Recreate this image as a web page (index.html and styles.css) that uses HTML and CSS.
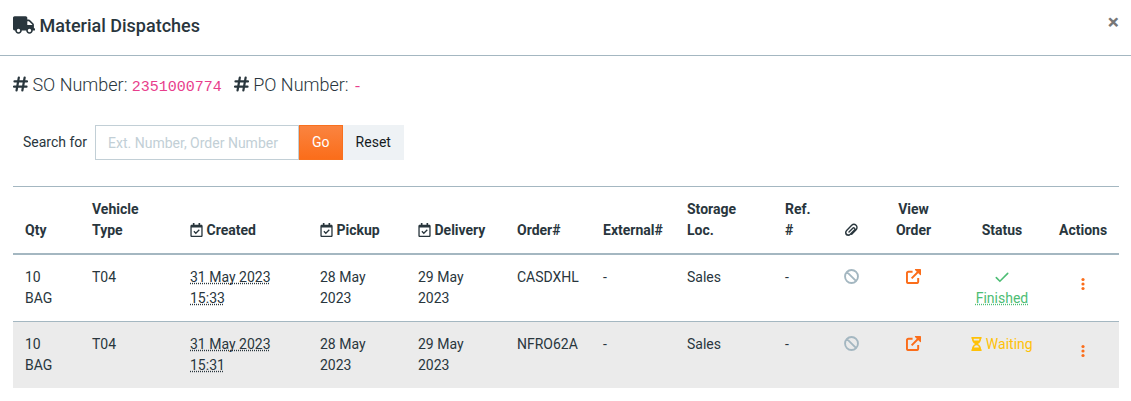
FILE: index.html
```html
<!DOCTYPE html>
<html lang="en">
<head>
    <meta charset="UTF-8">
    <meta name="viewport" content="width=device-width, initial-scale=1.0">
    <title>Material Dispatches</title>
    <link rel="stylesheet" href="styles.css">
</head>
<body>
    <svg class="sprite" aria-hidden="true">
        <symbol id="truck" viewBox="0 0 640 512">
            <path d="M624 352h-16V243.9c0-12.7-5.1-24.9-14.1-33.9L494 110.1c-9-9-21.2-14.1-33.9-14.1H416V48c0-26.5-21.5-48-48-48H48C21.5 0 0 21.5 0 48v320c0 26.5 21.5 48 48 48h16c0 53 43 96 96 96s96-43 96-96h128c0 53 43 96 96 96s96-43 96-96h48c8.8 0 16-7.2 16-16v-32c0-8.8-7.2-16-16-16zM160 464c-26.5 0-48-21.5-48-48s21.5-48 48-48 48 21.5 48 48-21.5 48-48 48zm320 0c-26.5 0-48-21.5-48-48s21.5-48 48-48 48 21.5 48 48-21.5 48-48 48zm80-208H416V144h44.1l99.9 99.9V256z"/>
        </symbol>
        <symbol id="hash" viewBox="0 0 16 16">
            <path d="M6.2 1.2 3.800 14.800M12.400 1.200 10 14.800M1.600 5.200H15M1 10.800H14.400" fill="none" stroke="currentColor" stroke-width="2.400" stroke-linecap="round"/>
        </symbol>
        <symbol id="calendar" viewBox="0 0 14 16">
            <path d="M3.2 0h1.1c.3 0 .4.2.4.4V2h4.6V.4c0-.2.1-.4.4-.4h1.1c.3 0 .4.2.4.4V2h1.3C13.3 2 14 2.7 14 3.5v11c0 .8-.7 1.5-1.5 1.5h-11C.7 16 0 15.3 0 14.5v-11C0 2.7.7 2 1.5 2h1.3V.4c0-.2.2-.4.4-.4zM1.5 5v9.3c0 .1.1.2.2.2h10.6c.1 0 .2-.1.2-.2V5z"/>
            <path d="m4 9.500 2.200 2.200L10.200 7.800" fill="none" stroke="currentColor" stroke-width="1.500"/>
        </symbol>
        <symbol id="clip" viewBox="0 0 16 16">
            <path d="M5.700 10.300 10 6a1.400 1.400 0 0 1 2 2L7.200 12.800A2.900 2.900 0 0 1 3 8.700L8.800 2.600a3.500 3.500 0 0 1 5 5L8.800 12.900M3 8.700a3.500 3.500 0 0 0 0 5 3.500 3.500 0 0 0 4.200-.9" fill="none" stroke="currentColor" stroke-width="1.600" stroke-linecap="round"/>
        </symbol>
        <symbol id="ban" viewBox="0 0 16 16">
            <path d="M3 3 13 13M8 1.100a6.900 6.900 0 1 0 0 13.800A6.900 6.900 0 1 0 8 1.100z" fill="none" stroke="currentColor" stroke-width="2"/>
        </symbol>
        <symbol id="external" viewBox="0 0 16 16">
            <path d="M7 3H2.500A1.500 1.500 0 0 0 1 4.500v9A1.500 1.500 0 0 0 2.500 15h9a1.500 1.500 0 0 0 1.500-1.500V9.500M6 10 13 3" fill="none" stroke="currentColor" stroke-width="2.100"/>
            <path d="M9.800 0H15.300q.7 0 .7.700V6.200q-.3.700-1 .2L9.600 1q-.4-.7.2-1z"/>
        </symbol>
        <symbol id="check" viewBox="0 0 14 14">
            <path d="M1.300 7.600 4.900 11.200 12.700 3.400" fill="none" stroke="currentColor" stroke-width="1.600" stroke-linecap="round"/>
        </symbol>
        <symbol id="hourglass" viewBox="0 0 384 512">
            <path d="M360 0H24C10.700 0 0 10.700 0 24v16c0 13.300 10.700 24 24 24 0 91 51 167.700 120.800 192C75 280.300 24 357 24 448c-13.300 0-24 10.700-24 24v16c0 13.300 10.700 24 24 24h336c13.300 0 24-10.700 24-24v-16c0-13.300-10.700-24-24-24 0-91-51-167.700-120.800-192C309 231.700 360 155 360 64c13.300 0 24-10.700 24-24V24c0-13.300-10.700-24-24-24zm-75 384H99c17-46.800 52-80 93-80s76 33.200 93 80zm0-256H99c-7.200-19.600-11-41-11-64h208c0 23-3.900 44.400-11 64z"/>
        </symbol>
        <symbol id="dots" viewBox="0 0 4 14">
            <circle cx="2" cy="2.500" r="1.600"/>
            <circle cx="2" cy="7" r="1.600"/>
            <circle cx="2" cy="11.500" r="1.600"/>
        </symbol>
    </svg>

    <header class="modal-header">
        <h1 class="modal-title"><svg class="icon-truck"><use href="#truck"/></svg> Material Dispatches</h1>
        <button type="button" class="close" aria-label="Close">&times;</button>
    </header>

    <main class="modal-body">
        <div class="numbers">
            <span><svg class="icon-hash"><use href="#hash"/></svg> SO Number: <code>2351000774</code></span>
            <span><svg class="icon-hash"><use href="#hash"/></svg> PO Number: <code>-</code></span>
        </div>

        <form class="search">
            <label for="search">Search for</label>
            <div class="input-group">
                <input type="text" id="search" placeholder="Ext. Number, Order Number">
                <button type="submit" class="btn btn-primary">Go</button>
                <button type="reset" class="btn btn-light">Reset</button>
            </div>
        </form>

        <table class="table">
            <colgroup>
                <col class="col-qty">
                <col class="col-date">
                <col class="col-created">
                <col class="col-date">
                <col class="col-delivery">
                <col class="col-order">
                <col class="col-external">
                <col class="col-date">
                <col class="col-ref">
                <col class="col-clip">
                <col class="col-view">
                <col class="col-status">
                <col class="col-actions">
            </colgroup>
            <thead>
                <tr>
                    <th>Qty</th>
                    <th>Vehicle Type</th>
                    <th><svg class="icon-calendar"><use href="#calendar"/></svg> Created</th>
                    <th><svg class="icon-calendar"><use href="#calendar"/></svg> Pickup</th>
                    <th><svg class="icon-calendar"><use href="#calendar"/></svg> Delivery</th>
                    <th>Order#</th>
                    <th>External#</th>
                    <th>Storage Loc.</th>
                    <th>Ref. #</th>
                    <th class="center"><svg class="icon"><use href="#clip"/></svg></th>
                    <th class="center">View Order</th>
                    <th class="center">Status</th>
                    <th class="center">Actions</th>
                </tr>
            </thead>
            <tbody>
                <tr>
                    <td>10 BAG</td>
                    <td>T04</td>
                    <td><abbr>31 May 2023 15:33</abbr></td>
                    <td>28 May 2023</td>
                    <td>29 May 2023</td>
                    <td>CASDXHL</td>
                    <td>-</td>
                    <td>Sales</td>
                    <td>-</td>
                    <td class="center muted"><svg class="icon-lg"><use href="#ban"/></svg></td>
                    <td class="center"><a href="#" class="link" aria-label="View order"><svg class="icon-lg"><use href="#external"/></svg></a></td>
                    <td class="center finished"><svg class="icon"><use href="#check"/></svg> <abbr>Finished</abbr></td>
                    <td class="center"><button type="button" class="menu" aria-label="Actions"><svg class="icon-dots"><use href="#dots"/></svg></button></td>
                </tr>
                <tr>
                    <td>10 BAG</td>
                    <td>T04</td>
                    <td><abbr>31 May 2023 15:31</abbr></td>
                    <td>28 May 2023</td>
                    <td>29 May 2023</td>
                    <td>NFRO62A</td>
                    <td>-</td>
                    <td>Sales</td>
                    <td>-</td>
                    <td class="center muted"><svg class="icon-lg"><use href="#ban"/></svg></td>
                    <td class="center"><a href="#" class="link" aria-label="View order"><svg class="icon-lg"><use href="#external"/></svg></a></td>
                    <td class="center waiting"><svg class="icon-hourglass"><use href="#hourglass"/></svg> Waiting</td>
                    <td class="center"><button type="button" class="menu" aria-label="Actions"><svg class="icon-dots"><use href="#dots"/></svg></button></td>
                </tr>
            </tbody>
        </table>
    </main>
</body>
</html>
```
FILE: styles.css
```css
* {
    box-sizing: border-box;
}

body {
    margin: 0;
    background-color: #fff;
    color: #29363d;
    font-family: Roboto, "Liberation Sans", sans-serif;
    font-size: 14px;
    line-height: 21px;
}

svg {
    fill: currentColor;
}

.sprite {
    display: none;
}

.modal-header {
    display: flex;
    align-items: flex-start;
    justify-content: space-between;
    padding: 12px 12px 16px 13px;
    border-bottom: 1px solid #a4b7c1;
}

.modal-title {
    margin: 0;
    font-size: 18px;
    font-weight: 500;
    line-height: 27px;
}

.close {
    padding: 0;
    border: 0;
    background: none;
    color: #777;
    font-family: inherit;
    font-size: 21px;
    font-weight: 700;
    line-height: 21px;
}

.modal-body {
    padding: 15px 12px 12px 13px;
}

.numbers {
    display: flex;
    gap: 12px;
    font-size: 18px;
    font-weight: 300;
    line-height: 27px;
}

code {
    color: #e83e8c;
    font-family: "Liberation Mono", monospace;
    font-size: 15px;
    font-weight: 400;
}

.search {
    display: flex;
    align-items: center;
    gap: 8px;
    margin: 24px 10px 26px;
}

.input-group {
    display: flex;
}

.input-group input {
    width: 204px;
    height: 35px;
    padding: 6px 12px;
    border: 1px solid #c2cfd6;
    border-radius: 0;
    background-color: #fff;
    color: #3e515b;
    font-family: inherit;
    font-size: 14px;
}

.input-group input::placeholder {
    color: #c2cfd6;
}

.btn {
    padding: 0 12px;
    border: 1px solid transparent;
    font-family: inherit;
    font-size: 14px;
    line-height: 21px;
}

.btn-primary {
    border-color: #f8701e;
    background: linear-gradient(#fa8440, #fb6d1a);
    color: #fff;
}

.btn-light {
    background-color: #eef2f5;
    color: #151b1e;
}

.table {
    width: 100%;
    table-layout: fixed;
    border-collapse: collapse;
}

.table th,
.table td {
    padding: 12px;
    border-top: 1px solid #a4b7c1;
    text-align: left;
    vertical-align: top;
}

.table th {
    border-bottom: 2px solid #a4b7c1;
    font-weight: 700;
    vertical-align: bottom;
}

.table tbody tr:nth-child(even) {
    background-color: #ebebeb;
}

.table .center {
    text-align: center;
}

.col-qty { width: 67px; }
.col-date { width: 98px; }
.col-created { width: 130px; }
.col-delivery { width: 99px; }
.col-order { width: 86px; }
.col-external { width: 84px; }
.col-ref { width: 59px; }
.col-clip { width: 38px; }
.col-view { width: 87px; }
.col-status { width: 90px; }
.col-actions { width: 72px; }

abbr {
    text-decoration: underline dotted;
    text-decoration-skip-ink: none;
}

.muted {
    color: #a4b7c1;
}

.link,
.menu {
    color: #fb6d1a;
}

.menu {
    display: block;
    margin: 0 auto;
    padding: 10px 0;
    border: 0;
    background: none;
}

.finished {
    color: #4dbd74;
}

.waiting {
    color: #ffc107;
}

.icon {
    width: 14px;
    height: 14px;
    vertical-align: -2px;
}

.icon-lg {
    width: 15px;
    height: 15px;
    vertical-align: -2px;
}

.icon-calendar {
    width: 13px;
    height: 14px;
    vertical-align: -2px;
}

.icon-hourglass {
    width: 11px;
    height: 14px;
    vertical-align: -2px;
}

.icon-truck {
    width: 22px;
    height: 18px;
    vertical-align: -2px;
}

.icon-hash {
    width: 15px;
    height: 16px;
    vertical-align: -1px;
}

.icon-dots {
    display: block;
    width: 4px;
    height: 14px;
}
```
